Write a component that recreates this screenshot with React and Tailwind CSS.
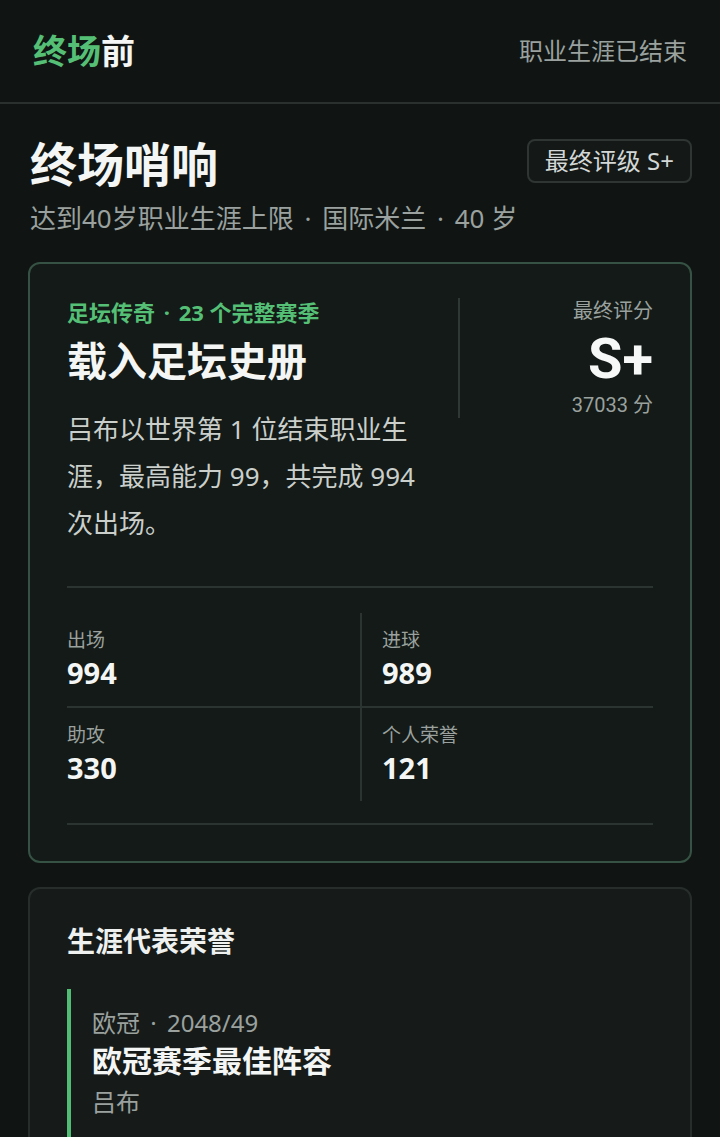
export default function App() {
  const font = "font-['Noto_Sans','Noto_Sans_CJK_SC',sans-serif]";
  return (
    <div className={`min-h-screen w-[720px] bg-[#101514] text-[#f1f3f2] ${font}`}>
      {/* Header */}
      <header className="h-[104px] border-b-2 border-[#2a302e] px-[33px] flex items-center justify-between">
        <div className="text-[34px] font-bold leading-none">
          <span className="text-[#55bf76]">终场</span>
          <span className="text-[#f4f6f5]">前</span>
        </div>
        <div className="text-[24px] text-[#9aa19e] leading-none">职业生涯已结束</div>
      </header>

      <main className="px-[28px] pt-[32px] pb-[40px]">
        {/* Title row */}
        <div className="flex items-start justify-between">
          <div className="pl-[2px]">
            <h1 className="text-[47px] font-bold leading-[56px] text-[#f4f6f5]">终场哨响</h1>
            <p className="mt-[9px] text-[26px] leading-[34px] text-[#9aa19e]">
              达到40岁职业生涯上限 <span className="px-[4px]">·</span> 国际米兰 <span className="px-[4px]">·</span> 40 岁
            </p>
          </div>
          <div className="mt-[3px] h-[44px] px-[16px] flex items-center rounded-[8px] border-2 border-[#2f3533] bg-[#141918] text-[24px] text-[#d3d7d5]">
            最终评级 S+
          </div>
        </div>

        {/* Card 1 */}
        <section className="mt-[27px] rounded-[12px] border-2 border-[#365244] bg-[#131a17] px-[37px] pt-[34px] pb-[36px]">
          <div className="flex items-start">
            <div className="flex-1">
              <div className="text-[22px] font-bold leading-[28px] text-[#55bf76]">
                足坛传奇 <span className="px-[3px]">·</span> 23 个完整赛季
              </div>
              <div className="mt-[10px] text-[40px] font-bold leading-[50px] text-[#f4f6f5]">
                载入足坛史册
              </div>
              <p className="mt-[20px] max-w-[358px] text-[26px] leading-[47px] text-[#cacfcc]">
                吕布以世界第 1 位结束职业生涯，最高能力 99，共完成 994 次出场。
              </p>
            </div>
            <div className="w-[195px] border-l-2 border-[#2f3834] flex flex-col items-end font-['Roboto','Noto_Sans_CJK_SC',sans-serif]">
              <div className="text-[20px] leading-[26px] text-[#9aa19e]">最终评分</div>
              <div className="mt-[2px] text-[56px] font-bold leading-[66px] text-[#f6f8f7]">S+</div>
              <div className="text-[20px] leading-[26px] text-[#9aa19e]">37033 分</div>
            </div>
          </div>

          {/* Stats */}
          <div className="mt-[39px] border-t-2 border-b-2 border-[#2b3430] pt-[25px] pb-[22px]">
            <div className="grid grid-cols-2">
              <div className="border-b-2 border-[#2b3430] pt-[14px] pb-[15px]">
                <div className="text-[19px] leading-[26px] text-[#9aa19e]">出场</div>
                <div className="mt-[2px] text-[29px] font-bold leading-[36px] text-[#f4f6f5]">994</div>
              </div>
              <div className="border-b-2 border-l-2 border-[#2b3430] pl-[20px] pt-[14px] pb-[15px]">
                <div className="text-[19px] leading-[26px] text-[#9aa19e]">进球</div>
                <div className="mt-[2px] text-[29px] font-bold leading-[36px] text-[#f4f6f5]">989</div>
              </div>
              <div className="pt-[14px] pb-[15px]">
                <div className="text-[19px] leading-[26px] text-[#9aa19e]">助攻</div>
                <div className="mt-[2px] text-[29px] font-bold leading-[36px] text-[#f4f6f5]">330</div>
              </div>
              <div className="border-l-2 border-[#2b3430] pl-[20px] pt-[14px] pb-[15px]">
                <div className="text-[19px] leading-[26px] text-[#9aa19e]">个人荣誉</div>
                <div className="mt-[2px] text-[29px] font-bold leading-[36px] text-[#f4f6f5]">121</div>
              </div>
            </div>
          </div>
        </section>

        {/* Card 2 */}
        <section className="mt-[24px] rounded-[12px] border-2 border-[#272d2b] bg-[#161b1a] px-[37px] pt-[34px] pb-[36px]">
          <h2 className="text-[28px] font-bold leading-[36px] text-[#eef1ef]">生涯代表荣誉</h2>
          <div className="mt-[30px] border-l-4 border-[#4fbd72] pl-[21px] pt-[18px] pb-[28px]">
            <div className="text-[24px] leading-[32px] text-[#9aa19e]">
              欧冠 <span className="px-[4px]">·</span> 2048/49
            </div>
            <div className="mt-[2px] text-[30px] font-bold leading-[40px] text-[#f4f6f5]">欧冠赛季最佳阵容</div>
            <div className="mt-[5px] text-[24px] leading-[32px] text-[#9aa19e]">吕布</div>
          </div>
        </section>
      </main>
    </div>
  );
}
